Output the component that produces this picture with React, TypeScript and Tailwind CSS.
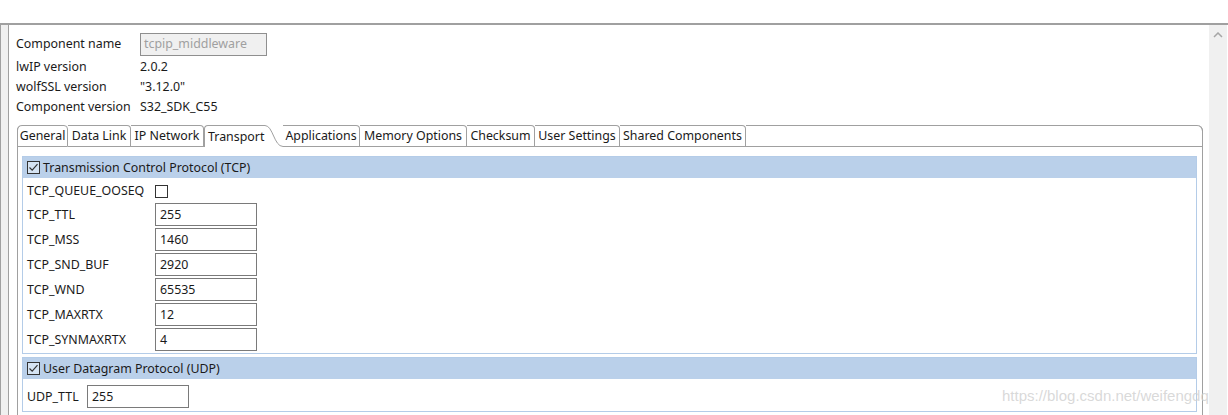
import React from "react";

const infoRows = [
  { label: "lwIP version", value: "2.0.2" },
  { label: "wolfSSL version", value: "\"3.12.0\"" },
  { label: "Component version", value: "S32_SDK_C55" },
];

const tabs = [
  { name: "General", w: "w-[51px]" },
  { name: "Data Link", w: "w-[63px]" },
  { name: "IP Network", w: "w-[73px]" },
  { name: "Transport", w: "w-[79px]", selected: true },
  { name: "Applications", w: "w-[77px]" },
  { name: "Memory Options", w: "w-[107px]" },
  { name: "Checksum", w: "w-[68px]" },
  { name: "User Settings", w: "w-[85px]" },
  { name: "Shared Components", w: "w-[126px]" },
];

const tcpFields = [
  { name: "TCP_TTL", value: "255" },
  { name: "TCP_MSS", value: "1460" },
  { name: "TCP_SND_BUF", value: "2920" },
  { name: "TCP_WND", value: "65535" },
  { name: "TCP_MAXRTX", value: "12" },
  { name: "TCP_SYNMAXRTX", value: "4" },
];

function CheckBox({ checked }: { checked?: boolean }) {
  return (
    <div className="w-[13px] h-[13px] border border-[#333333] bg-white/40 flex items-center justify-center shrink-0">
      {checked && (
        <svg width="11" height="11" viewBox="0 0 11 11">
          <path d="M1.5 5.5 L4.2 8.2 L9.5 2.2" fill="none" stroke="#333333" strokeWidth="1.2" />
        </svg>
      )}
    </div>
  );
}

function TextBox({ value, w = "w-[102px]" }: { value: string; w?: string }) {
  return (
    <div className={`${w} h-[23px] border border-[#7a7a7a] bg-white flex items-center pl-[4px] pt-[1px] text-[#1a1a1a]`}>
      {value}
    </div>
  );
}

function GroupHeader({ title }: { title: string }) {
  return (
    <div className="h-[21px] bg-[#bad0ea] flex items-center pl-[4px] gap-[3px]">
      <CheckBox checked />
      <span className="text-[#1a1a1a] pt-[1px]">{title}</span>
    </div>
  );
}

export default function App() {
  return (
    <div className="w-[1228px] h-[415px] overflow-hidden bg-white relative font-['Noto_Sans',sans-serif] text-[12.4px] leading-none text-[#1a1a1a]">
      <div className="h-[23px]" />
      <div className="flex h-[392px] border-t-2 border-[#a0a0a0]">
        {/* left strip */}
        <div className="w-[9px] bg-[#f0f0f0] border-l border-r border-[#a0a0a0]" />

        {/* main */}
        <div className="w-[1200px] pt-[7px] pl-[7px]">
          <div className="flex items-center h-[23px] pt-[1px]">
            <div className="w-[124px]">Component name</div>
            <div className="w-[127px] h-[23px] border border-[#8f8f8f] bg-[#f0f0f0] flex items-center pl-[3px] text-[#a0a0a0]">
              tcpip_middleware
            </div>
          </div>
          <div className="mt-[1px]">
            {infoRows.map((r) => (
              <div key={r.label} className="flex items-center h-[20px] pt-[2px]">
                <div className="w-[124px]">{r.label}</div>
                <div>{r.value}</div>
              </div>
            ))}
          </div>

          {/* tab folder */}
          <div className="mt-[9px] ml-[1px] w-[1186px] h-[300px] border-l border-r border-[#a0a0a0] rounded-tr-[6px] rounded-tl-[5px] relative">
            <div className="flex h-[22px] -mx-[1px]">
              {tabs.map((t, i) =>
                t.selected ? (
                  <div key={t.name} className={`${t.w} h-[22px] flex relative`}>
                    <div className="flex-1 border-t border-l border-[#a0a0a0] rounded-tl-[4px] flex items-center pl-[3px] pt-[2px]">
                      {t.name}
                    </div>
                    <svg width="18" height="22" viewBox="0 0 18 22" className="shrink-0">
                      <path d="M0 0.5 C 8 0.5, 9 21.5, 18 21.5" fill="none" stroke="#a0a0a0" strokeWidth="1" />
                    </svg>
                  </div>
                ) : (
                  <div
                    key={t.name}
                    className={`${t.w} h-[22px] border-t border-r border-b border-[#a0a0a0] rounded-tr-[4px] ${
                      i === 0 ? "border-l rounded-tl-[5px]" : ""
                    } flex items-center justify-center pt-[1px]`}
                  >
                    {t.name}
                  </div>
                )
              )}
              <div className="flex-1 h-[22px] border-t border-b border-r border-[#a0a0a0] rounded-tr-[6px]" />
            </div>

            <div className="pt-[9px] pl-[4px] pr-[5px]">
              {/* TCP group */}
              <div className="border border-[#b4cce8]">
                <GroupHeader title="Transmission Control Protocol (TCP)" />
                <div className="pl-[4px]">
                  <div className="flex items-center h-[25px] pt-[1px]">
                    <div className="w-[128px] pt-[1px]">TCP_QUEUE_OOSEQ</div>
                    <CheckBox />
                  </div>
                  {tcpFields.map((f) => (
                    <div key={f.name} className="flex items-center h-[23px] mb-[2px]">
                      <div className="w-[128px] pt-[1px]">{f.name}</div>
                      <TextBox value={f.value} />
                    </div>
                  ))}
                </div>
              </div>

              {/* UDP group */}
              <div className="mt-[3px] border border-[#b4cce8]">
                <GroupHeader title="User Datagram Protocol (UDP)" />
                <div className="pl-[4px] pt-[6px] pb-[3px] flex items-center">
                  <div className="w-[60px] pt-[1px]">UDP_TTL</div>
                  <TextBox value="255" />
                </div>
              </div>
            </div>
          </div>
        </div>

        {/* scrollbar */}
        <div className="w-[18px] bg-[#f0f0f0] flex justify-center pt-[7px]">
          <svg width="10" height="6" viewBox="0 0 10 6">
            <path d="M1 5 L5 1 L9 5" fill="none" stroke="#a6a6a6" strokeWidth="1.5" />
          </svg>
        </div>
        <div className="w-[1px]" />
      </div>

      <div className="absolute left-[1002px] top-[386px] font-['Liberation_Sans',sans-serif] text-[15px] leading-[20px] text-[#cfcfcf]/80">
        https://blog.csdn.net/weifengdq
      </div>
    </div>
  );
}
